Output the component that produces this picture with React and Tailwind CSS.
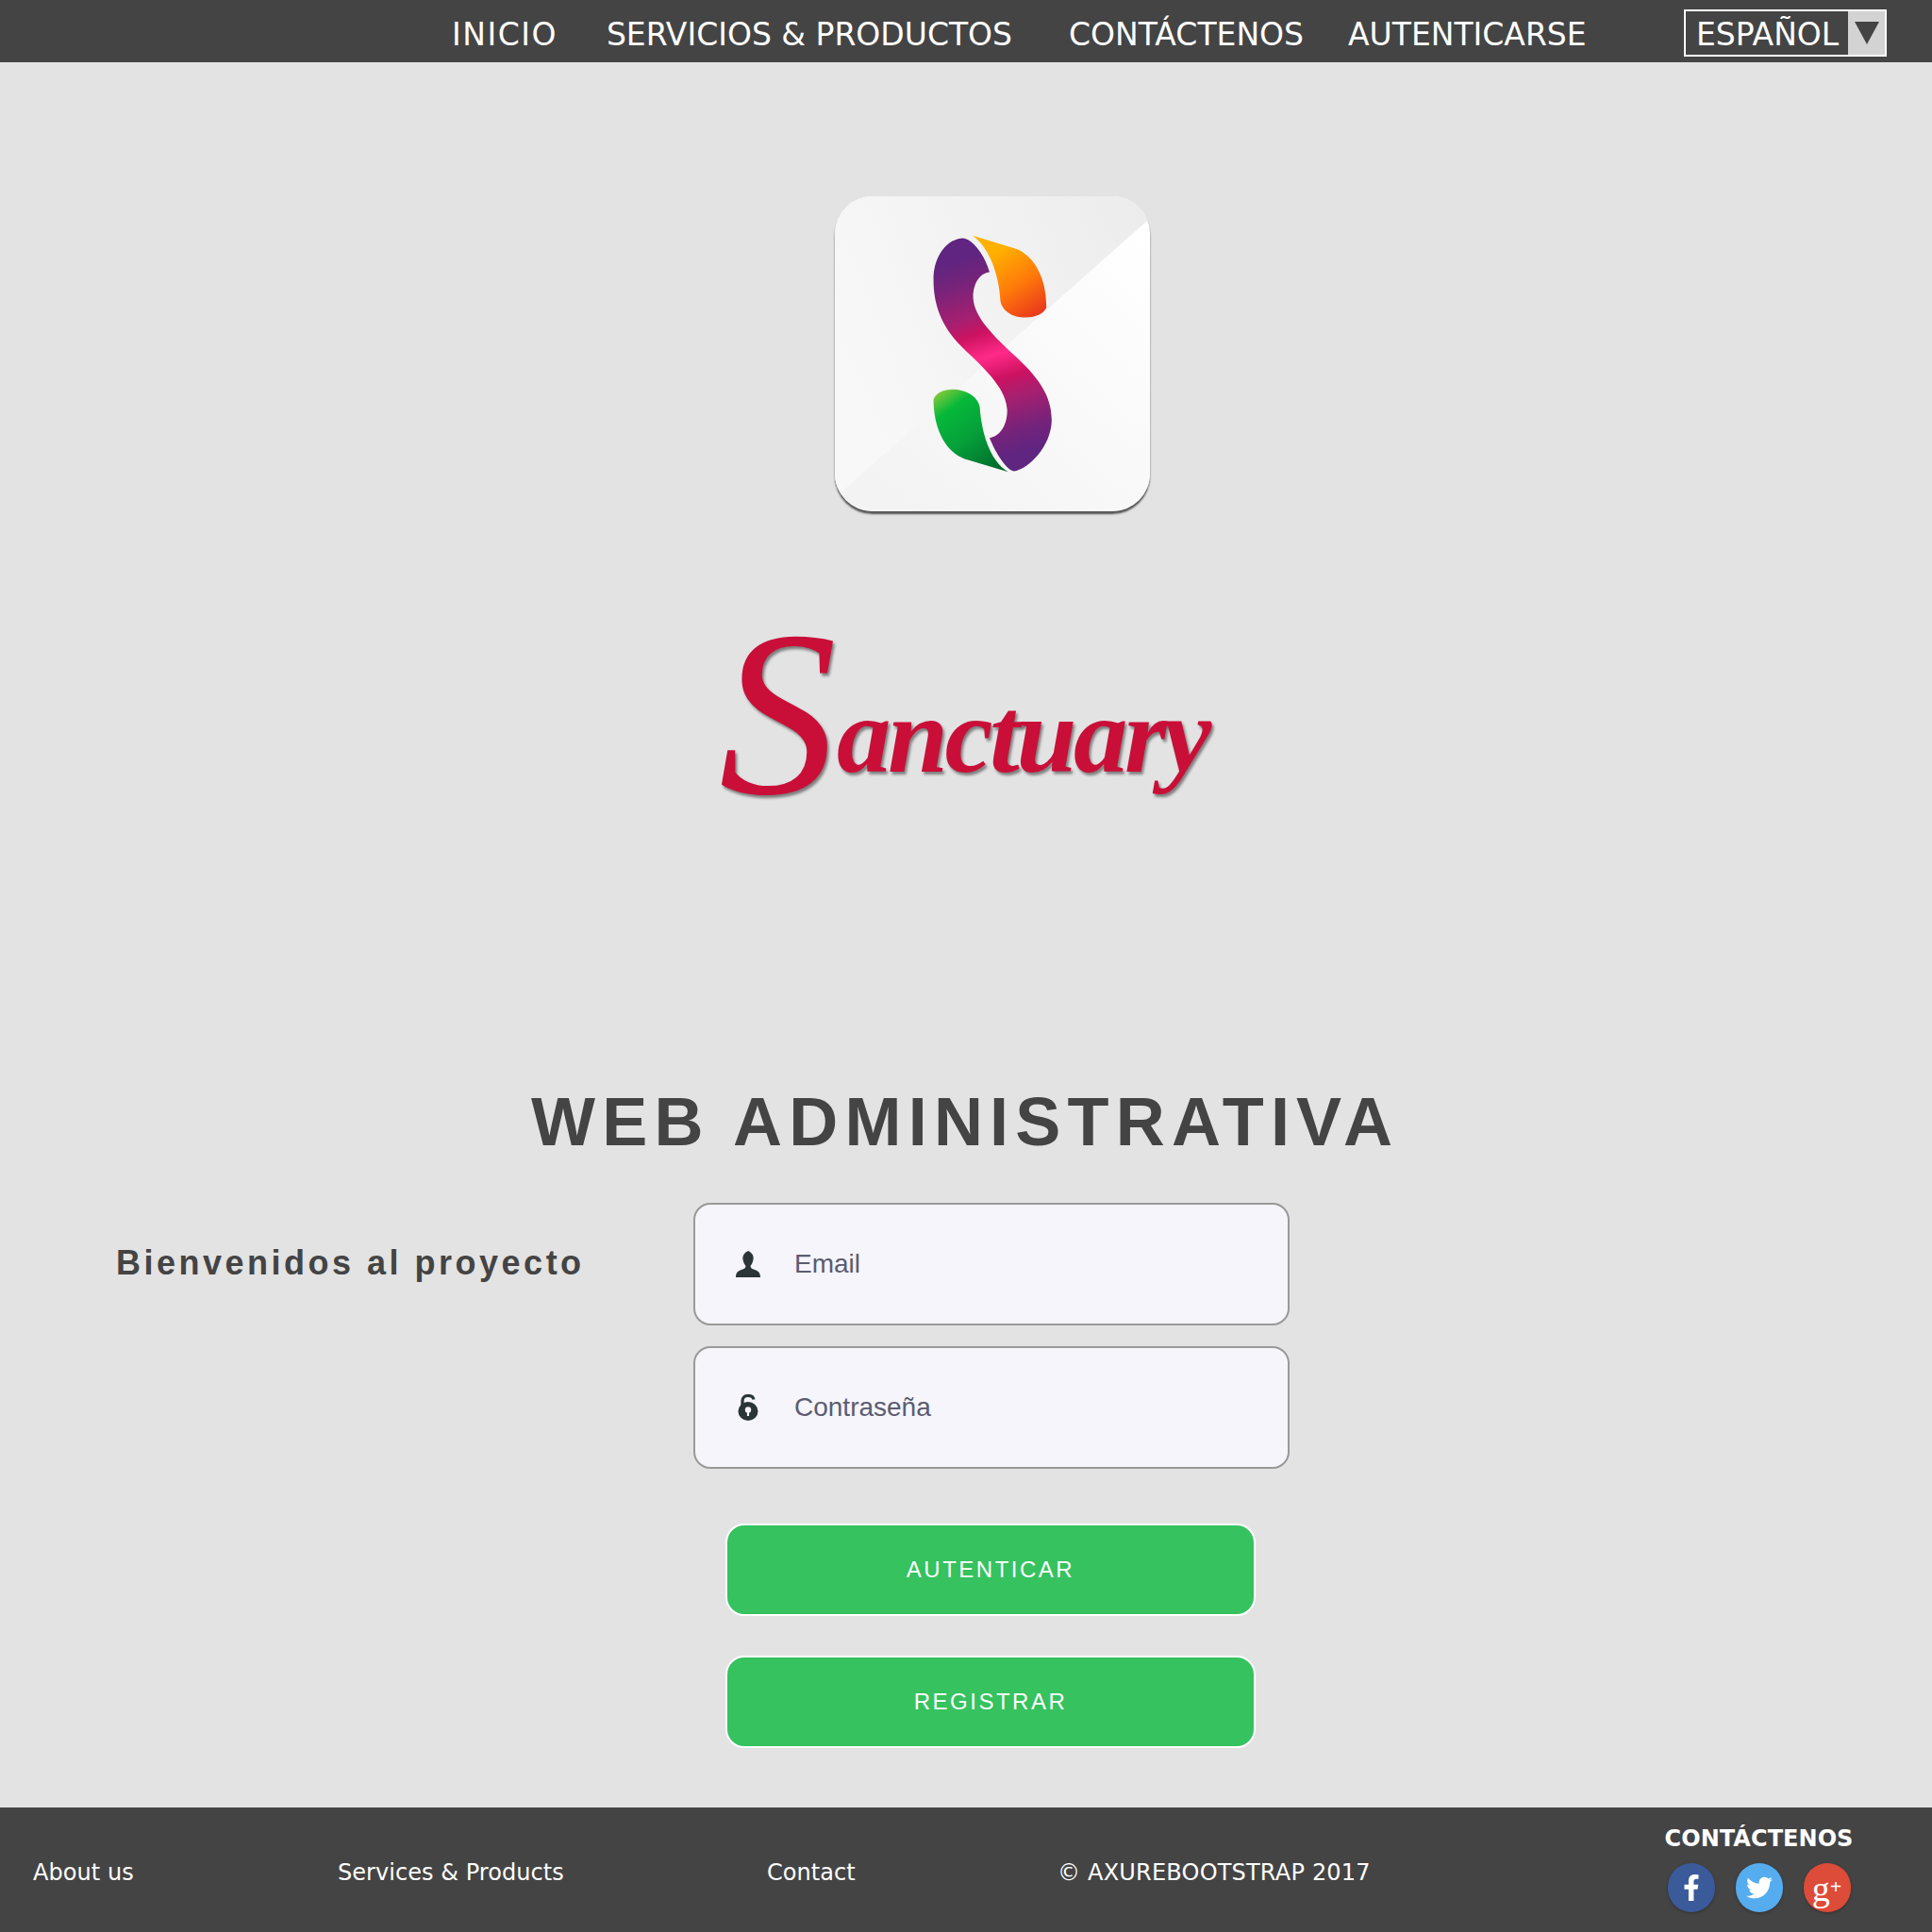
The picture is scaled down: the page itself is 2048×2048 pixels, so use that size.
import React from "react";
import { FaFacebookF, FaTwitter } from "react-icons/fa";

function AppMark() {
  return (
    <svg viewBox="75 55 1000 1000" className="block w-full h-full">
      <defs>
        <linearGradient id="tl" x1="75" y1="500" x2="1075" y2="100" gradientUnits="userSpaceOnUse">
          <stop offset="0" stopColor="#f8f8f8" />
          <stop offset="1" stopColor="#ececec" />
        </linearGradient>
        <linearGradient id="br" x1="1075" y1="200" x2="300" y2="1055" gradientUnits="userSpaceOnUse">
          <stop offset="0" stopColor="#ffffff" />
          <stop offset="1" stopColor="#f3f3f3" />
        </linearGradient>
        <linearGradient id="body" x1="480" y1="250" x2="670" y2="870" gradientUnits="userSpaceOnUse">
          <stop offset="0" stopColor="#5f2580" />
          <stop offset="0.12" stopColor="#76237a" />
          <stop offset="0.3" stopColor="#a81f70" />
          <stop offset="0.38" stopColor="#cc1260" />
          <stop offset="0.5" stopColor="#ff2a88" />
          <stop offset="0.62" stopColor="#cc1260" />
          <stop offset="0.72" stopColor="#a81f70" />
          <stop offset="0.88" stopColor="#76237a" />
          <stop offset="1" stopColor="#5f2580" />
        </linearGradient>
        <linearGradient id="orange" x1="600" y1="225" x2="735" y2="430" gradientUnits="userSpaceOnUse">
          <stop offset="0" stopColor="#ffb000" />
          <stop offset="0.5" stopColor="#ff7a0a" />
          <stop offset="1" stopColor="#e8341c" />
        </linearGradient>
        <linearGradient id="green" x1="415" y1="675" x2="590" y2="925" gradientUnits="userSpaceOnUse">
          <stop offset="0" stopColor="#7ac83a" />
          <stop offset="0.2" stopColor="#06b83a" />
          <stop offset="0.55" stopColor="#05a03a" />
          <stop offset="1" stopColor="#006a2c" />
        </linearGradient>
      </defs>
      <rect x="75" y="55" width="1000" height="1000" fill="url(#br)" />
      <polygon points="75,55 1075,55 1075,125 75,1012" fill="url(#tl)" />
      <path
        fill="url(#body)"
        d="M480 188C510 188 550 240 566 296C530 300 512 340 514 380C518 440 580 500 650 565C720 630 765 690 763 770C760 850 690 920 645 928C620 925 585 870 566 822C600 818 622 780 622 735C620 670 560 610 490 545C420 480 388 410 388 320C388 240 435 190 480 188Z"
      />
      <path
        fill="url(#orange)"
        d="M512 180L650 222C710 245 748 320 746 410C735 430 710 440 680 440C640 440 605 420 600 385C598 320 570 220 512 180Z"
      />
      <path
        fill="url(#green)"
        d="M625 930L485 888C425 865 388 790 388 700C395 680 420 668 450 668C490 668 530 690 535 725C540 800 565 895 625 930Z"
      />
    </svg>
  );
}

function UserIcon() {
  return (
    <svg viewBox="0 0 26 28" className="w-[26px] h-[28px]" fill="#2b3436">
      <path d="M13 0C14 0 14.500 1 15.500 1.500C18 3 19 6 18.500 9C18 12 17 14 15.500 16C15.500 18 17 19 20 20C23.500 21 26 23 26 28H0C0 23 2.500 21 6 20C9 19 10.500 18 10.500 16C9 14 8 12 7.500 9C7 5 9 2 12 .7Z" />
    </svg>
  );
}

function LockIcon() {
  return (
    <svg viewBox="0 0 22 28" className="w-[22px] h-[28px]">
      <path d="M5 14V7C5 3.500 7.500 1.500 11 1.500C14 1.500 16.500 3 17 5.500" fill="none" stroke="#2b3436" strokeWidth="3.200" />
      <ellipse cx="11" cy="18" rx="10.500" ry="10" fill="#2b3436" />
      <circle cx="11" cy="16.500" r="3.200" fill="#f5f5fb" />
      <rect x="9.900" y="17" width="2.200" height="6" fill="#f5f5fb" />
    </svg>
  );
}

function Field({ icon, label }) {
  return (
    <div className="flex items-center w-[632px] h-[130px] rounded-[18px] border-2 border-[#999999] bg-[#f5f5fb]">
      <div className="flex justify-center w-[26px] ml-[43px] mr-[36px]">{icon}</div>
      <span className="text-[28px] text-[#5c5b70] font-['Liberation_Sans',sans-serif]">{label}</span>
    </div>
  );
}

function GreenButton({ children }) {
  return (
    <button className="flex items-center justify-center w-[562px] h-[98px] rounded-[20px] border-2 border-white bg-[#35c25f] text-white text-[24px] tracking-[2.5px] font-['Liberation_Sans',sans-serif]">
      {children}
    </button>
  );
}

function Social({ color, children }) {
  return (
    <div className={`flex items-center justify-center w-[50px] h-[52px] rounded-full text-white shadow-[0_1px_3px_rgba(0,0,0,0.3)] ${color}`}>
      {children}
    </div>
  );
}

export default function App() {
  return (
    <div className="flex flex-col w-[2048px] h-[2048px] bg-[#e3e3e3] font-['DejaVu_Sans',sans-serif]">
      <header className="flex items-center h-[66px] pt-[8px] bg-[#444444] text-white text-[33px]">
        <a className="ml-[479px] tracking-[1.5px]">INICIO</a>
        <a className="ml-[52px]">SERVICIOS &amp; PRODUCTOS</a>
        <a className="ml-[60px]">CONTÁCTENOS</a>
        <a className="ml-[47px]">AUTENTICARSE</a>
        <div className="flex items-stretch self-start w-[215px] h-[50px] mt-[2px] ml-auto mr-[48px] border-2 border-white">
          <span className="flex-1 pl-[11px] leading-[50px]">ESPAÑOL</span>
          <span className="flex items-center justify-center w-[39px] bg-[#d3d3d3]">
            <svg viewBox="0 0 26 24" className="w-[26px] h-[24px]" fill="#444444"><polygon points="0,0 26,0 13,24" /></svg>
          </span>
        </div>
      </header>

      <main className="flex flex-col flex-1">
        <div className="w-[334px] h-[334px] mt-[142px] ml-[885px] rounded-[40px] overflow-hidden shadow-[0_3px_2px_rgba(60,60,60,0.85)]">
          <AppMark />
        </div>

        <div className="mt-[100px] ml-[762px] h-[230px] whitespace-nowrap leading-[230px] text-[#c90f38] italic font-['Liberation_Serif',serif] [text-shadow:2px_3px_3px_rgba(0,0,0,0.45)]">
          <span className="text-[250px] align-[-23px]">S</span>
          <span className="text-[115px] font-bold tracking-[-3.5px]">anctuary</span>
        </div>

        <h1 className="mt-[277px] ml-[563px] text-[72px] leading-[80px] font-bold tracking-[7.2px] text-[#444444] whitespace-nowrap font-['Liberation_Sans',sans-serif]">
          WEB ADMINISTRATIVA
        </h1>

        <div className="flex items-start mt-[46px]">
          <p className="w-[735px] pl-[123px] pt-[40px] text-[36px] leading-[48px] font-bold tracking-[3.5px] text-[#444444] whitespace-nowrap font-['Liberation_Sans',sans-serif]">
            Bienvenidos al proyecto
          </p>
          <div className="flex flex-col gap-[22px]">
            <Field icon={<UserIcon />} label="Email" />
            <Field icon={<LockIcon />} label="Contraseña" />
          </div>
        </div>

        <div className="flex flex-col gap-[42px] mt-[58px] ml-[769px]">
          <GreenButton>AUTENTICAR</GreenButton>
          <GreenButton>REGISTRAR</GreenButton>
        </div>
      </main>

      <footer className="flex items-center h-[132px] bg-[#444444] text-white text-[24px] tracking-[0.05px]">
        <a className="ml-[35px] w-[323px] pt-[5px]">About us</a>
        <a className="w-[455px] pt-[5px]">Services &amp; Products</a>
        <a className="w-[308px] pt-[5px]">Contact</a>
        <span className="pt-[5px] tracking-[0.2px]">© AXUREBOOTSTRAP 2017</span>
        <div className="flex flex-col items-center ml-auto mr-[84px] w-[199px]">
          <span className="text-[24px] leading-[32px] font-bold">CONTÁCTENOS</span>
          <div className="flex gap-[22px] mt-[10px] mb-[4px]">
            <Social color="bg-[#3b5a9a]"><FaFacebookF className="w-[26px] h-[28px]" /></Social>
            <Social color="bg-[#55acee]"><FaTwitter className="w-[28px] h-[28px]" /></Social>
            <Social color="bg-[#dd4b39]">
              <span className="text-[38px] leading-[40px] font-['Liberation_Serif',serif]">g<span className="text-[22px] font-bold align-[8px]">+</span></span>
            </Social>
          </div>
        </div>
      </footer>
    </div>
  );
}
